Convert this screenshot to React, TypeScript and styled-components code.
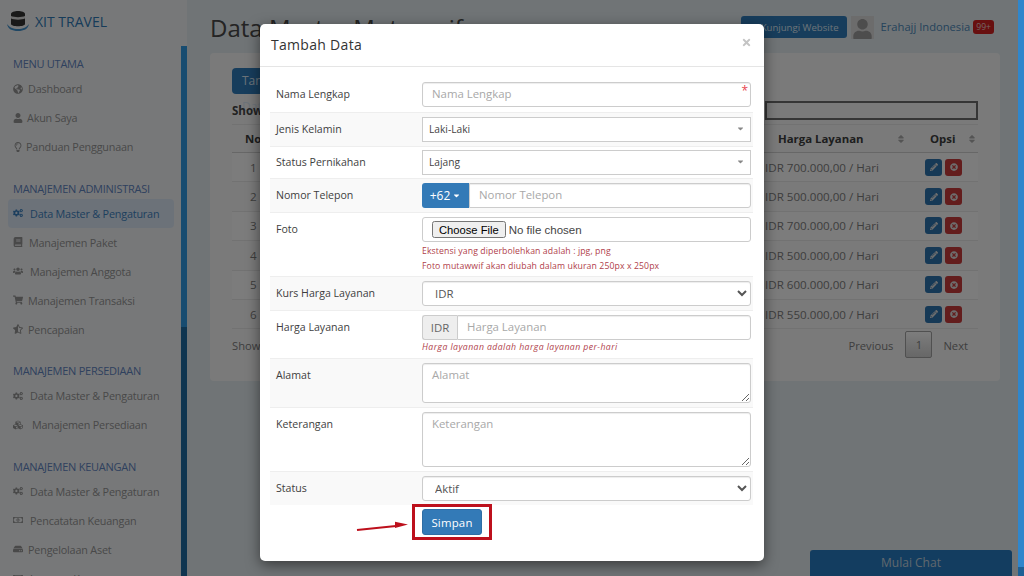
import React from 'react';
import styled, { createGlobalStyle } from 'styled-components';
import {
  FaBook,
  FaCaretDown,
  FaCogs,
  FaCubes,
  FaGlobeAmericas,
  FaHdd,
  FaPencilAlt,
  FaRegLightbulb,
  FaRegMoneyBillAlt,
  FaShoppingCart,
  FaSort,
  FaStarHalfAlt,
  FaTimes,
  FaTimesCircle,
  FaUser,
  FaUsers,
} from 'react-icons/fa';

const GlobalStyle = createGlobalStyle`
  html, body {
    margin: 0;
    height: 576px;
    overflow: hidden;
  }
  body {
    font-family: "Open Sans", "Liberation Sans", sans-serif;
    font-size: 12px;
  }
  * {
    box-sizing: border-box;
  }
`;

const Page = styled.div`
  position: relative;
  display: flex;
  width: 1024px;
  height: 576px;
  overflow: hidden;
  background: #e0e9ec;
`;

const Sidebar = styled.aside`
  flex: 0 0 181px;
  height: 576px;
  overflow: hidden;
  padding-top: 10px;
  background: #eff1f3;
`;

const Brand = styled.div`
  display: flex;
  align-items: center;
  gap: 6px;
  height: 22px;
  padding-left: 7px;
  margin-bottom: 22px;
  color: #2f78b4;
  font-size: 14px;
  font-weight: 500;
`;

const NavGroup = styled.div`
  margin-bottom: 17.5px;
`;

const NavTitle = styled.div`
  height: 20px;
  padding-left: 13px;
  line-height: 20px;
  color: #5e82bd;
  font-size: 11px;
  letter-spacing: -0.26px;
`;

const NavItem = styled.div<{ $active?: boolean; $gap?: number }>`
  display: flex;
  align-items: center;
  gap: ${(p) => p.$gap ?? 6}px;
  height: 29px;
  margin: 0 7px 0 8px;
  padding-left: 5px;
  border-radius: 4px;
  color: ${(p) => (p.$active ? '#3b7fbd' : '#929292')};
  background: ${(p) => (p.$active ? '#d9e5f3' : 'transparent')};
  font-size: 10.8px;
  letter-spacing: -0.18px;
  white-space: nowrap;
  svg {
    flex: none;
    font-size: 10px;
  }
`;

const Rail = styled.div`
  flex: 0 0 6px;
  height: 576px;
  padding-top: 46px;
  background: #eff1f3;
`;

const RailTrack = styled.div`
  height: 530px;
  background: #1e6aa0;
`;

const RailThumb = styled.div`
  height: 281px;
  background: #3098e0;
`;

const Main = styled.main`
  flex: 1;
  padding: 15px 24px 0 23px;
`;

const TopBar = styled.div`
  display: flex;
  align-items: flex-start;
  height: 38px;
`;

const Title = styled.h1`
  flex: 1;
  margin: 0;
  color: #484848;
  font-size: 24px;
  font-weight: 500;
  line-height: 26px;
  white-space: nowrap;
`;

const VisitButton = styled.div`
  display: flex;
  align-items: center;
  justify-content: flex-end;
  width: 106px;
  height: 22px;
  margin-top: 1px;
  padding-right: 8px;
  border-radius: 3px;
  color: #d8e6f2;
  background: #2f7ab8;
  font-size: 9.6px;
`;

const Avatar = styled.div`
  display: flex;
  align-items: flex-end;
  justify-content: center;
  width: 23px;
  height: 23px;
  margin: 1px 0 0 4px;
  overflow: hidden;
  color: #9a9a9a;
  background: #d8d8d8;
  svg {
    font-size: 21px;
    margin-bottom: -1px;
  }
`;

const UserName = styled.div`
  margin: 4px 0 0 7px;
  color: #4b87b8;
  font-size: 11.2px;
  line-height: 16px;
`;

const Badge = styled.span`
  height: 14px;
  margin: 5px 6px 0 3px;
  padding: 0 3px;
  border-radius: 3px;
  color: #e8c8c8;
  background: #d02020;
  font-size: 8.6px;
  line-height: 14px;
`;

const Card = styled.section`
  height: 328px;
  padding: 15px 22px 0;
  border-radius: 4px;
  background: #f5f5f5;
`;

const AddButton = styled.div`
  width: 80px;
  height: 26px;
  padding-left: 10px;
  border-radius: 4px;
  color: #d8e6f2;
  background: #2f7ab8;
  font-size: 12px;
  line-height: 26px;
`;

const TableTools = styled.div`
  display: flex;
  align-items: center;
  justify-content: space-between;
  height: 30px;
  padding-top: 2px;
  color: #444;
  font-size: 11.5px;
  font-weight: 700;
`;

const SearchBox = styled.div`
  align-self: flex-start;
  width: 213px;
  height: 19px;
  margin-top: 5px;
  border: 2px solid #6a6a6a;
`;

const Table = styled.table`
  width: 100%;
  table-layout: fixed;
  border-collapse: collapse;
`;

const HeadCell = styled.th<{ $width?: number; $pad?: number; $sortRight?: number }>`
  position: relative;
  width: ${(p) => (p.$width ? `${p.$width}px` : 'auto')};
  height: 28px;
  padding: 0 0 0 ${(p) => p.$pad ?? 0}px;
  border-top: 1px solid #e4e4e4;
  border-bottom: 1px solid #cfcfcf;
  color: #3c3c3c;
  font-size: 11.4px;
  font-weight: 700;
  text-align: left;
  svg {
    position: absolute;
    top: 9px;
    right: ${(p) => p.$sortRight ?? 5}px;
    color: #a8a8a8;
    font-size: 10px;
  }
`;

const Row = styled.tr<{ $odd: boolean }>`
  height: 29.4px;
  background: ${(p) => (p.$odd ? '#f9f9f9' : 'transparent')};
`;

const Cell = styled.td`
  padding: 0;
  border-bottom: 1px solid #e4e4e4;
  color: #7c7c7c;
  font-size: 11.6px;
`;

const NoCell = styled(Cell)`
  padding-left: 18px;
`;

const ActionRow = styled.div`
  display: flex;
  gap: 3px;
  padding-left: 13px;
`;

const ActionButton = styled.span<{ $danger?: boolean }>`
  display: flex;
  align-items: center;
  justify-content: center;
  width: 17px;
  height: 17px;
  border-radius: 3px;
  color: #dddddd;
  background: ${(p) => (p.$danger ? '#c63a3a' : '#2c72ac')};
  svg {
    font-size: 8px;
  }
`;

const TableFooter = styled.div`
  display: flex;
  align-items: center;
  justify-content: space-between;
  height: 34px;
  margin-top: -1px;
  color: #7c7c7c;
  font-size: 11.2px;
`;

const Pager = styled.div`
  display: flex;
  align-items: center;
  padding-right: 10px;
`;

const PageNumber = styled.span`
  width: 27px;
  height: 27px;
  margin: -2px 11px 0 12px;
  border: 1px solid #a0a0a0;
  border-radius: 2px;
  background: linear-gradient(#fafafa, #cfcfcf);
  line-height: 25px;
  text-align: center;
`;

const ChatTab = styled.div`
  position: absolute;
  right: 12px;
  bottom: 0;
  width: 202px;
  height: 26px;
  border-radius: 3px 3px 0 0;
  color: #c0d0dc;
  background: #267ac0;
  font-size: 12px;
  line-height: 26px;
  text-align: center;
`;

const Backdrop = styled.div`
  position: absolute;
  inset: 0;
  background: rgba(0, 0, 0, 0.5);
`;

const ScrollTrack = styled.div`
  position: absolute;
  top: 0;
  right: 0;
  width: 6px;
  height: 576px;
  background: #1c5f94;
`;

const ScrollThumb = styled.div`
  height: 567px;
  background: #2f86cc;
`;

const Modal = styled.div`
  position: absolute;
  top: 24px;
  left: 260px;
  width: 504px;
  height: 537px;
  border-radius: 5px;
  background: #fff;
  box-shadow: 0 4px 14px rgba(0, 0, 0, 0.5);
`;

const ModalHeader = styled.header`
  display: flex;
  align-items: center;
  justify-content: space-between;
  height: 43px;
  padding: 0 12px 2px 11px;
  border-bottom: 1px solid #e5e5e5;
`;

const ModalTitle = styled.h4`
  margin: 0;
  color: #333;
  font-size: 14px;
  font-weight: 500;
  letter-spacing: 0.3px;
`;

const CloseIcon = styled(FaTimes)`
  margin-bottom: 4px;
  color: #c4c4c4;
  font-size: 11px;
`;

const Form = styled.form`
  margin: 11px 11px 0 10px;
`;

const FormRow = styled.div<{ $zebra?: boolean; $top?: number; $bottom?: number; $bare?: boolean }>`
  display: grid;
  grid-template-columns: 148px 1fr;
  padding: ${(p) => p.$top ?? 4}px 2px ${(p) => p.$bottom ?? 4}px 0;
  border-top: ${(p) => (p.$bare ? 'none' : '1px solid #eeeeee')};
  background: ${(p) => (p.$zebra ? '#f9f9f9' : 'transparent')};
`;

const Label = styled.label<{ $top?: boolean }>`
  padding: ${(p) => (p.$top ? '5px 0 0 6px' : '0 0 2px 6px')};
  align-self: ${(p) => (p.$top ? 'start' : 'center')};
  color: #3e3e3e;
  font-size: 10.6px;
`;

const Field = styled.div`
  position: relative;
  margin-left: 4px;
`;

const TextInput = styled.input`
  display: block;
  width: 100%;
  height: 25px;
  padding: 0 9px 2px;
  border: 1px solid #ccc;
  border-radius: 3px;
  outline: none;
  color: #555;
  background: #fff;
  font-family: inherit;
  font-size: 11.4px;
  box-shadow: inset 0 1px 1px rgba(0, 0, 0, 0.075);
  &::placeholder {
    color: #a8a8a8;
    opacity: 1;
  }
`;

const RequiredMark = styled.span`
  position: absolute;
  top: 3px;
  right: 3px;
  color: #e8454f;
  font-size: 12px;
  line-height: 12px;
`;

const FakeSelect = styled.div`
  display: flex;
  align-items: center;
  justify-content: space-between;
  height: 25px;
  padding: 0 5px 2px 6px;
  border: 1px solid #ccc;
  color: #444;
  background: #fff;
  font-size: 10.2px;
  svg {
    color: #888;
    font-size: 9px;
  }
`;

const InputGroup = styled.div`
  display: flex;
  height: 25px;
`;

const DialButton = styled.div`
  display: flex;
  flex: 0 0 47px;
  align-items: center;
  justify-content: center;
  gap: 2px;
  border-radius: 3px 0 0 3px;
  color: #fff;
  background: #337ab7;
  font-size: 12px;
  svg {
    font-size: 9px;
  }
`;

const Addon = styled.div`
  flex: 0 0 35px;
  border: 1px solid #ccc;
  border-right: none;
  border-radius: 3px 0 0 3px;
  color: #666;
  background: #eeeeee;
  font-size: 11.4px;
  line-height: 23px;
  text-align: center;
`;

const GroupInput = styled(TextInput)`
  flex: 1;
  border-radius: 0 3px 3px 0;
`;

const FileBox = styled.div`
  display: flex;
  align-items: center;
  height: 25px;
  padding-left: 9px;
  border: 1px solid #ccc;
  border-radius: 3px;
  background: #fff;
`;

const FileInput = styled.input`
  width: 100%;
  color: #444;
  font-family: "Liberation Sans", sans-serif;
  font-size: 11.5px;
  &::file-selector-button {
    height: 17px;
    margin-right: 3px;
    padding: 0 5px;
    font-size: 11.2px;
  }
`;

const Hints = styled.div<{ $top: number }>`
  padding-top: ${(p) => p.$top}px;
`;

const Hint = styled.p<{ $italic?: boolean }>`
  margin: 0;
  color: #b0404a;
  font-size: 8.7px;
  font-style: ${(p) => (p.$italic ? 'italic' : 'normal')};
  line-height: 15px;
  letter-spacing: ${(p) => (p.$italic ? 0.42 : 0.1)}px;
`;

const NativeSelect = styled.select`
  display: block;
  width: 100%;
  height: 25px;
  padding: 0 8px;
  border: 1px solid #ccc;
  border-radius: 3px;
  color: #555;
  background: #fff;
  font-family: inherit;
  font-size: 11.4px;
  box-shadow: inset 0 1px 1px rgba(0, 0, 0, 0.075);
`;

const TextArea = styled.textarea<{ $height: number }>`
  display: block;
  width: 100%;
  height: ${(p) => p.$height}px;
  padding: 3px 9px;
  border: 1px solid #ccc;
  border-radius: 3px;
  outline: none;
  font-family: inherit;
  font-size: 11.4px;
  box-shadow: inset 0 1px 1px rgba(0, 0, 0, 0.075);
  &::placeholder {
    color: #a8a8a8;
    opacity: 1;
  }
`;

const SubmitRow = styled.div`
  padding: 4px 0 0 152px;
`;

const SubmitAnchor = styled.div`
  position: relative;
  width: 60px;
`;

const SubmitButton = styled.button`
  display: block;
  width: 60px;
  height: 26px;
  padding: 0;
  border: 1px solid #2e6da4;
  border-radius: 3px;
  color: #fff;
  background: #337ab7;
  font-family: inherit;
  font-size: 11.4px;
  letter-spacing: 0.2px;
`;

const Highlight = styled.div`
  position: absolute;
  top: -5px;
  left: -10px;
  width: 80px;
  height: 36px;
  border: 3px solid #bd101c;
`;

const Arrow = styled.svg`
  position: absolute;
  top: 9px;
  left: -66px;
`;

const KaabaLogo = () => (
  <svg width="22" height="22" viewBox="0 0 22 22">
    <path d="M0 14c1 5 5 7 11 7s10-2 11-7c-2 3-6 5-11 5s-9-2-11-5z" fill="#3f8ec9" />
    <path d="M4 4c0-4 14-4 14 0v10c0 3-14 3-14 0z" fill="#333" />
    <path d="M4 6c3 1.500 11 1.500 14 0v2.500c-3 1.500-11 1.500-14 0z" fill="#d8d8d8" />
  </svg>
);

type NavEntry = { icon: React.ReactNode; label: string; gap?: number };

const navGroups: { title: string; items: NavEntry[] }[] = [
  {
    title: 'MENU UTAMA',
    items: [
      { icon: <FaGlobeAmericas />, label: 'Dashboard', gap: 5 },
      { icon: <FaUser />, label: 'Akun Saya', gap: 4 },
      { icon: <FaRegLightbulb />, label: 'Panduan Penggunaan', gap: 3 },
    ],
  },
  {
    title: 'MANAJEMEN ADMINISTRASI',
    items: [
      { icon: <FaCogs />, label: 'Data Master & Pengaturan', gap: 7 },
      { icon: <FaBook />, label: 'Manajemen Paket', gap: 6 },
      { icon: <FaUsers />, label: 'Manajemen Anggota', gap: 7 },
      { icon: <FaShoppingCart />, label: 'Manajemen Transaksi', gap: 5 },
      { icon: <FaStarHalfAlt />, label: 'Pencapaian', gap: 5 },
    ],
  },
  {
    title: 'MANAJEMEN PERSEDIAAN',
    items: [
      { icon: <FaCogs />, label: 'Data Master & Pengaturan', gap: 7 },
      { icon: <FaCubes />, label: 'Manajemen Persediaan', gap: 9 },
    ],
  },
  {
    title: 'MANAJEMEN KEUANGAN',
    items: [
      { icon: <FaCogs />, label: 'Data Master & Pengaturan', gap: 7 },
      { icon: <FaRegMoneyBillAlt />, label: 'Pencatatan Keuangan', gap: 7 },
      { icon: <FaHdd />, label: 'Pengelolaan Aset', gap: 5 },
      { icon: <FaRegMoneyBillAlt />, label: 'Laporan Keuangan', gap: 7 },
    ],
  },
];

const prices = ['700.000', '500.000', '700.000', '500.000', '600.000', '550.000'];

const App = () => {
  return (
    <Page>
      <GlobalStyle />
      <Sidebar>
        <Brand>
          <KaabaLogo />
          XIT TRAVEL
        </Brand>
        {navGroups.map((group) => (
          <NavGroup key={group.title}>
            <NavTitle>{group.title}</NavTitle>
            {group.items.map((item, i) => (
              <NavItem
                key={item.label}
                $active={group.title === 'MANAJEMEN ADMINISTRASI' && i === 0}
                $gap={item.gap}
              >
                {item.icon}
                {item.label}
              </NavItem>
            ))}
          </NavGroup>
        ))}
      </Sidebar>
      <Rail>
        <RailTrack>
          <RailThumb />
        </RailTrack>
      </Rail>
      <Main>
        <TopBar>
          <Title>Data Master Mutawwif</Title>
          <VisitButton>Kunjungi Website</VisitButton>
          <Avatar>
            <FaUser />
          </Avatar>
          <UserName>Erahajj Indonesia</UserName>
          <Badge>99+</Badge>
        </TopBar>
        <Card>
          <AddButton>Tambah Data</AddButton>
          <TableTools>
            Show
            <SearchBox />
          </TableTools>
          <Table>
            <thead>
              <tr>
                <HeadCell $width={60} $pad={13}>No</HeadCell>
                <HeadCell />
                <HeadCell $width={147} $pad={13} $sortRight={6}>
                  Harga Layanan
                  <FaSort />
                </HeadCell>
                <HeadCell $width={66} $pad={18} $sortRight={1}>
                  Opsi
                  <FaSort />
                </HeadCell>
              </tr>
            </thead>
            <tbody>
              {prices.map((price, i) => (
                <Row key={i} $odd={i % 2 === 0}>
                  <NoCell>{i + 1}</NoCell>
                  <Cell />
                  <Cell>IDR {price},00 / Hari</Cell>
                  <Cell>
                    <ActionRow>
                      <ActionButton>
                        <FaPencilAlt />
                      </ActionButton>
                      <ActionButton $danger>
                        <FaTimesCircle />
                      </ActionButton>
                    </ActionRow>
                  </Cell>
                </Row>
              ))}
            </tbody>
          </Table>
          <TableFooter>
            Show
            <Pager>
              Previous
              <PageNumber>1</PageNumber>
              Next
            </Pager>
          </TableFooter>
        </Card>
      </Main>
      <ChatTab>Mulai Chat</ChatTab>
      <Backdrop />
      <ScrollTrack>
        <ScrollThumb />
      </ScrollTrack>
      <Modal>
        <ModalHeader>
          <ModalTitle>Tambah Data</ModalTitle>
          <CloseIcon />
        </ModalHeader>
        <Form>
          <FormRow $bare $bottom={5}>
            <Label>Nama Lengkap</Label>
            <Field>
              <TextInput placeholder="Nama Lengkap" />
              <RequiredMark>*</RequiredMark>
            </Field>
          </FormRow>
          <FormRow $zebra>
            <Label>Jenis Kelamin</Label>
            <Field>
              <FakeSelect>
                Laki-Laki
                <FaCaretDown />
              </FakeSelect>
            </Field>
          </FormRow>
          <FormRow $top={3} $bottom={3}>
            <Label>Status Pernikahan</Label>
            <Field>
              <FakeSelect>
                Lajang
                <FaCaretDown />
              </FakeSelect>
            </Field>
          </FormRow>
          <FormRow $zebra>
            <Label>Nomor Telepon</Label>
            <Field>
              <InputGroup>
                <DialButton>
                  +62
                  <FaCaretDown />
                </DialButton>
                <GroupInput placeholder="Nomor Telepon" />
              </InputGroup>
            </Field>
          </FormRow>
          <FormRow $bottom={2}>
            <Label $top>Foto</Label>
            <Field>
              <FileBox>
                <FileInput type="file" />
              </FileBox>
              <Hints $top={2}>
                <Hint>Ekstensi yang diperbolehkan adalah : jpg, png</Hint>
                <Hint>Foto mutawwif akan diubah dalam ukuran 250px x 250px</Hint>
              </Hints>
            </Field>
          </FormRow>
          <FormRow $zebra>
            <Label $top>Kurs Harga Layanan</Label>
            <Field>
              <NativeSelect defaultValue="IDR">
                <option>IDR</option>
              </NativeSelect>
            </Field>
          </FormRow>
          <FormRow $bottom={3}>
            <Label $top>Harga Layanan</Label>
            <Field>
              <InputGroup>
                <Addon>IDR</Addon>
                <GroupInput placeholder="Harga Layanan" />
              </InputGroup>
              <Hints $top={0}>
                <Hint $italic>Harga layanan adalah harga layanan per-hari</Hint>
              </Hints>
            </Field>
          </FormRow>
          <FormRow $zebra>
            <Label $top>Alamat</Label>
            <Field>
              <TextArea $height={40} placeholder="Alamat" />
            </Field>
          </FormRow>
          <FormRow>
            <Label $top>Keterangan</Label>
            <Field>
              <TextArea $height={55} placeholder="Keterangan" />
            </Field>
          </FormRow>
          <FormRow $zebra>
            <Label $top>Status</Label>
            <Field>
              <NativeSelect defaultValue="Aktif">
                <option>Aktif</option>
              </NativeSelect>
            </Field>
          </FormRow>
          <SubmitRow>
            <SubmitAnchor>
              <SubmitButton type="button">Simpan</SubmitButton>
              <Highlight />
              <Arrow width="54" height="14" viewBox="0 0 54 14">
                <path d="M1 12L40 8" stroke="#bd101c" strokeWidth="2" />
                <path d="M52 6.500L39 3.700V10z" fill="#bd101c" />
              </Arrow>
            </SubmitAnchor>
          </SubmitRow>
        </Form>
      </Modal>
    </Page>
  );
};

export default App;
